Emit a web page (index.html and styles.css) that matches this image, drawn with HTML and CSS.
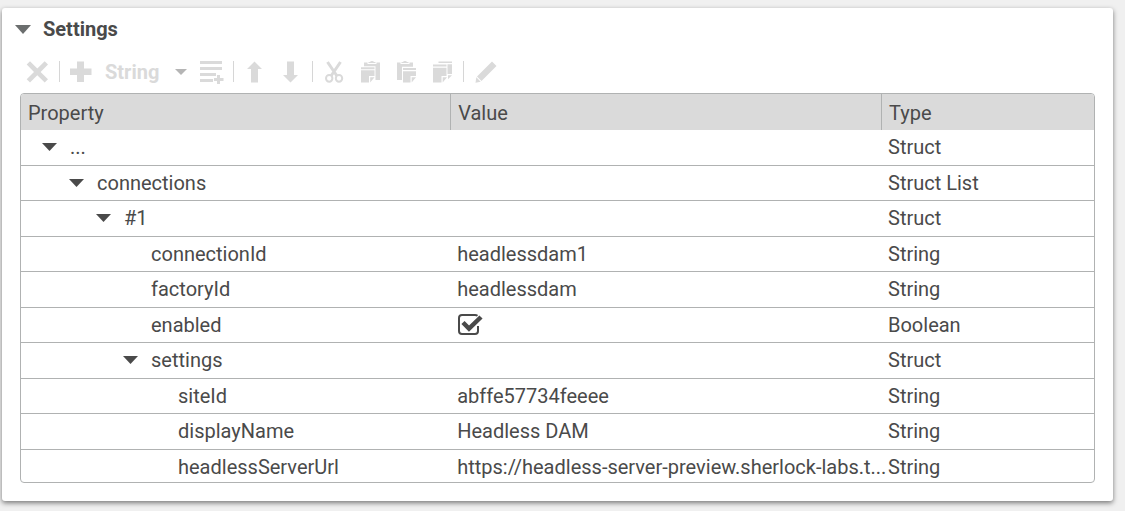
FILE: index.html
```html
<!DOCTYPE html>
<html lang="en">
<head>
<meta charset="utf-8">
<title>Settings</title>
<link rel="stylesheet" href="styles.css">
</head>
<body>
<section class="card">
  <h2 class="card-title">
    <button class="collapse" type="button" aria-expanded="true">
      <svg class="title-caret" width="16" height="9" viewBox="0 0 16 9" aria-hidden="true"><path d="M0 0h16L8 9z"/></svg>
      <span>Settings</span>
    </button>
  </h2>

  <div class="toolbar" role="toolbar" aria-label="Struct tools">
    <div class="group">
      <button class="tool" type="button" disabled aria-label="Remove"><svg viewBox="0 0 24 24"><path d="M4 1.3 11.300 8.600 18.700 1.300 22 4.600 14.600 12 22 19.300 18.700 22.600 11.300 15.300 4 22.600.700 19.300 8 12 .700 4.600z"/></svg></button>
    </div>
    <div class="group">
      <button class="tool" type="button" disabled aria-label="Add property"><svg viewBox="0 0 24 24"><path d="M8 1.500h7v7h7.500v6.500H15v7H8v-7H1V8.500h7z"/></svg></button>
      <span class="type-picker">
        <select class="type-select" aria-label="Property type" disabled><option>String</option></select>
        <svg class="type-caret" width="12" height="6" viewBox="0 0 12 6" aria-hidden="true"><path d="M0 0h12L6 6z"/></svg>
      </span>
      <button class="tool" type="button" disabled aria-label="Add item to list"><svg viewBox="0 0 24 24"><path d="M0 1h22v3H0zM0 7h22v3H0zM0 13h16v3H0zM0 19h13v3H0zM17 15h3v3h3.500v3H20v3h-3v-3h-3v-3h3z"/></svg></button>
    </div>
    <div class="group">
      <button class="tool" type="button" disabled aria-label="Move up"><svg viewBox="0 0 24 24"><path d="M11.500 1.500 19 9h-4v13.500H8V9H4z"/></svg></button>
      <button class="tool" type="button" disabled aria-label="Move down"><svg viewBox="0 0 24 24"><path d="M8 1.500h7V15h4l-7.500 7.500L4 15h4z"/></svg></button>
    </div>
    <div class="group">
      <button class="tool" type="button" disabled aria-label="Cut"><svg viewBox="0 0 24 24"><path d="M5.500 2 15 16M18.500 2 9 16" fill="none" stroke="currentColor" stroke-width="3"/><ellipse cx="7.200" cy="18.300" rx="3.200" ry="3.400" fill="none" stroke="currentColor" stroke-width="2"/><ellipse cx="17" cy="18.300" rx="3.200" ry="3.400" fill="none" stroke="currentColor" stroke-width="2"/></svg></button>
      <button class="tool" type="button" disabled aria-label="Copy"><svg viewBox="0 0 24 24"><path d="M6 6.300V2.500h3.500V4h9V2.500H22V20h-4.500V6.300zM10.500 3V2h1.500q.5-1 2-1t2 1h1.500v1z"/><path d="M3 7.300h13.500v2H3zM3 10.300h13.500V16h-5.500v6.500H3zM12.200 17.300h4.300l-4.300 5.200z"/></svg></button>
      <button class="tool" type="button" disabled aria-label="Paste"><svg viewBox="0 0 24 24"><path d="M3 2.500h3.500V4h9V2.500H19v4.200H8V20H3zM7.500 3V2H9q.5-1 2-1t2 1h1.500v1z"/><path d="M9 8h13v2H9zM9 11.200h13V16h-5.500v6.500H9zM17.700 17.300H22l-4.300 5.200z"/></svg></button>
      <button class="tool" type="button" disabled aria-label="Duplicate"><svg viewBox="0 0 24 24"><path d="M8.500 1.500H22V3H8.500zM17.500 4.200H22V14h-4.500zM3 4.500h13.500v2H3zM3 7.700h13.500V16h-5v6.500H3zM12.700 17.300H17l-4.300 5.200zM18 15.200h4l-4 4z"/></svg></button>
    </div>
    <div class="group">
      <button class="tool" type="button" disabled aria-label="Edit"><svg viewBox="0 0 24 24"><path d="M19 1.500 23.500 6 8.500 21 4 16.500zM3.300 17.300 7.700 21.700l-5.200 1z"/></svg></button>
    </div>
  </div>

  <div class="grid">
    <table class="props">
      <colgroup><col class="col-name"><col><col class="col-type"></colgroup>
      <thead>
        <tr><th scope="col">Property</th><th scope="col">Value</th><th scope="col">Type</th></tr>
      </thead>
      <tbody>
        <tr><td class="level-0"><button class="node" type="button"><i class="caret"></i>...</button></td><td></td><td>Struct</td></tr>
        <tr><td class="level-1"><button class="node" type="button"><i class="caret"></i>connections</button></td><td></td><td>Struct List</td></tr>
        <tr><td class="level-2"><button class="node" type="button"><i class="caret"></i>#1</button></td><td></td><td>Struct</td></tr>
        <tr><td class="level-4">connectionId</td><td>headlessdam1</td><td>String</td></tr>
        <tr><td class="level-4">factoryId</td><td>headlessdam</td><td>String</td></tr>
        <tr><td class="level-4"><label for="enabled">enabled</label></td><td><span class="check"><input id="enabled" type="checkbox" checked><svg viewBox="0 0 26 24" aria-hidden="true"><path d="M20.500 2.800Q19.500 2 18 2H5Q2 2 2 5v13q0 3 3 3h13q3 0 3-3v-5" fill="none" stroke="currentColor" stroke-width="2"/><path d="M6 9.500l6 6L24 4" fill="none" stroke="currentColor" stroke-width="4.500"/></svg></span></td><td>Boolean</td></tr>
        <tr><td class="level-3"><button class="node" type="button"><i class="caret"></i>settings</button></td><td></td><td>Struct</td></tr>
        <tr><td class="level-5">siteId</td><td>abffe57734feeee</td><td>String</td></tr>
        <tr><td class="level-5">displayName</td><td>Headless DAM</td><td>String</td></tr>
        <tr><td class="level-5">headlessServerUrl</td><td class="url">https://headless-server-preview.sherlock-labs.t...</td><td>String</td></tr>
      </tbody>
    </table>
  </div>
</section>
</body>
</html>
```

FILE: styles.css
```css
* {
  box-sizing: border-box;
}

body {
  margin: 0;
  padding: 8px 12px 10px 2px;
  background: #f0f0f0;
  color: #4a4a4a;
  font: 20px/24px Roboto, sans-serif;
}

button,
select {
  margin: 0;
  padding: 0;
  border: 0;
  background: none;
  color: inherit;
  font: inherit;
}

.card {
  padding: 0 18px 18px;
  border-radius: 3px;
  background: #fff;
  box-shadow: 0 2px 5px rgba(0, 0, 0, 0.5);
}

.card-title {
  display: flex;
  align-items: center;
  height: 42px;
  margin: 0 0 0 -5px;
  font-size: 20px;
}

.collapse {
  display: flex;
  align-items: center;
  gap: 12px;
}

.title-caret {
  fill: #6b6e6e;
}

.toolbar {
  display: flex;
  align-items: center;
  height: 43px;
  padding-left: 6px;
  color: #dadada;
}

.group {
  display: flex;
  align-items: center;
  gap: 12px;
  height: 21px;
  padding-right: 9px;
}

.group + .group {
  padding-left: 9px;
  border-left: 1px solid #d6d6d6;
}

.tool {
  width: 24px;
  height: 24px;
}

.tool svg {
  display: block;
  width: 24px;
  height: 24px;
  fill: currentColor;
}

.type-picker {
  position: relative;
  display: flex;
  width: 83px;
}

.type-select {
  width: 100%;
  appearance: none;
  opacity: 1;
  font-weight: 700;
}

.type-caret {
  position: absolute;
  top: 9px;
  right: 1px;
  fill: #b5b5b5;
  pointer-events: none;
}

.grid {
  max-height: 390px;
  overflow: hidden;
  border: 1px solid #b0b2b2;
  border-radius: 4px;
}

.props {
  width: 100%;
  table-layout: fixed;
  border-collapse: separate;
  border-spacing: 0;
}

.col-name {
  width: 40%;
}

.col-type {
  width: 213px;
}

th,
td {
  padding: 0 7px;
  overflow: hidden;
  text-align: left;
  text-overflow: ellipsis;
  white-space: nowrap;
}

th {
  height: 36px;
  padding-top: 2px;
  background: #dadada;
  font-weight: 400;
}

th + th {
  border-left: 1px solid #b0b2b2;
}

td {
  height: 36px;
  padding-bottom: 1px;
  border-bottom: 1px solid #b0b2b2;
}

tr:nth-child(even) td {
  height: 35px;
  padding-bottom: 0;
}

.url {
  padding-right: 0;
  overflow: visible;
}

.level-0 { padding-left: 21px; }
.level-1 { padding-left: 48px; }
.level-2 { padding-left: 75px; }
.level-3 { padding-left: 102px; }
.level-4 { padding-left: 130px; }
.level-5 { padding-left: 157px; }

.node {
  display: flex;
  align-items: center;
  gap: 13px;
}

.caret {
  width: 15px;
  height: 8px;
  background: #4a4a4a;
  clip-path: polygon(0 0, 100% 0, 50% 100%);
}

.check {
  position: relative;
  display: block;
  width: 26px;
  height: 24px;
}

.check input {
  position: absolute;
  inset: 0;
  width: 100%;
  height: 100%;
  margin: 0;
  opacity: 0;
}

.check svg {
  display: block;
}
```
